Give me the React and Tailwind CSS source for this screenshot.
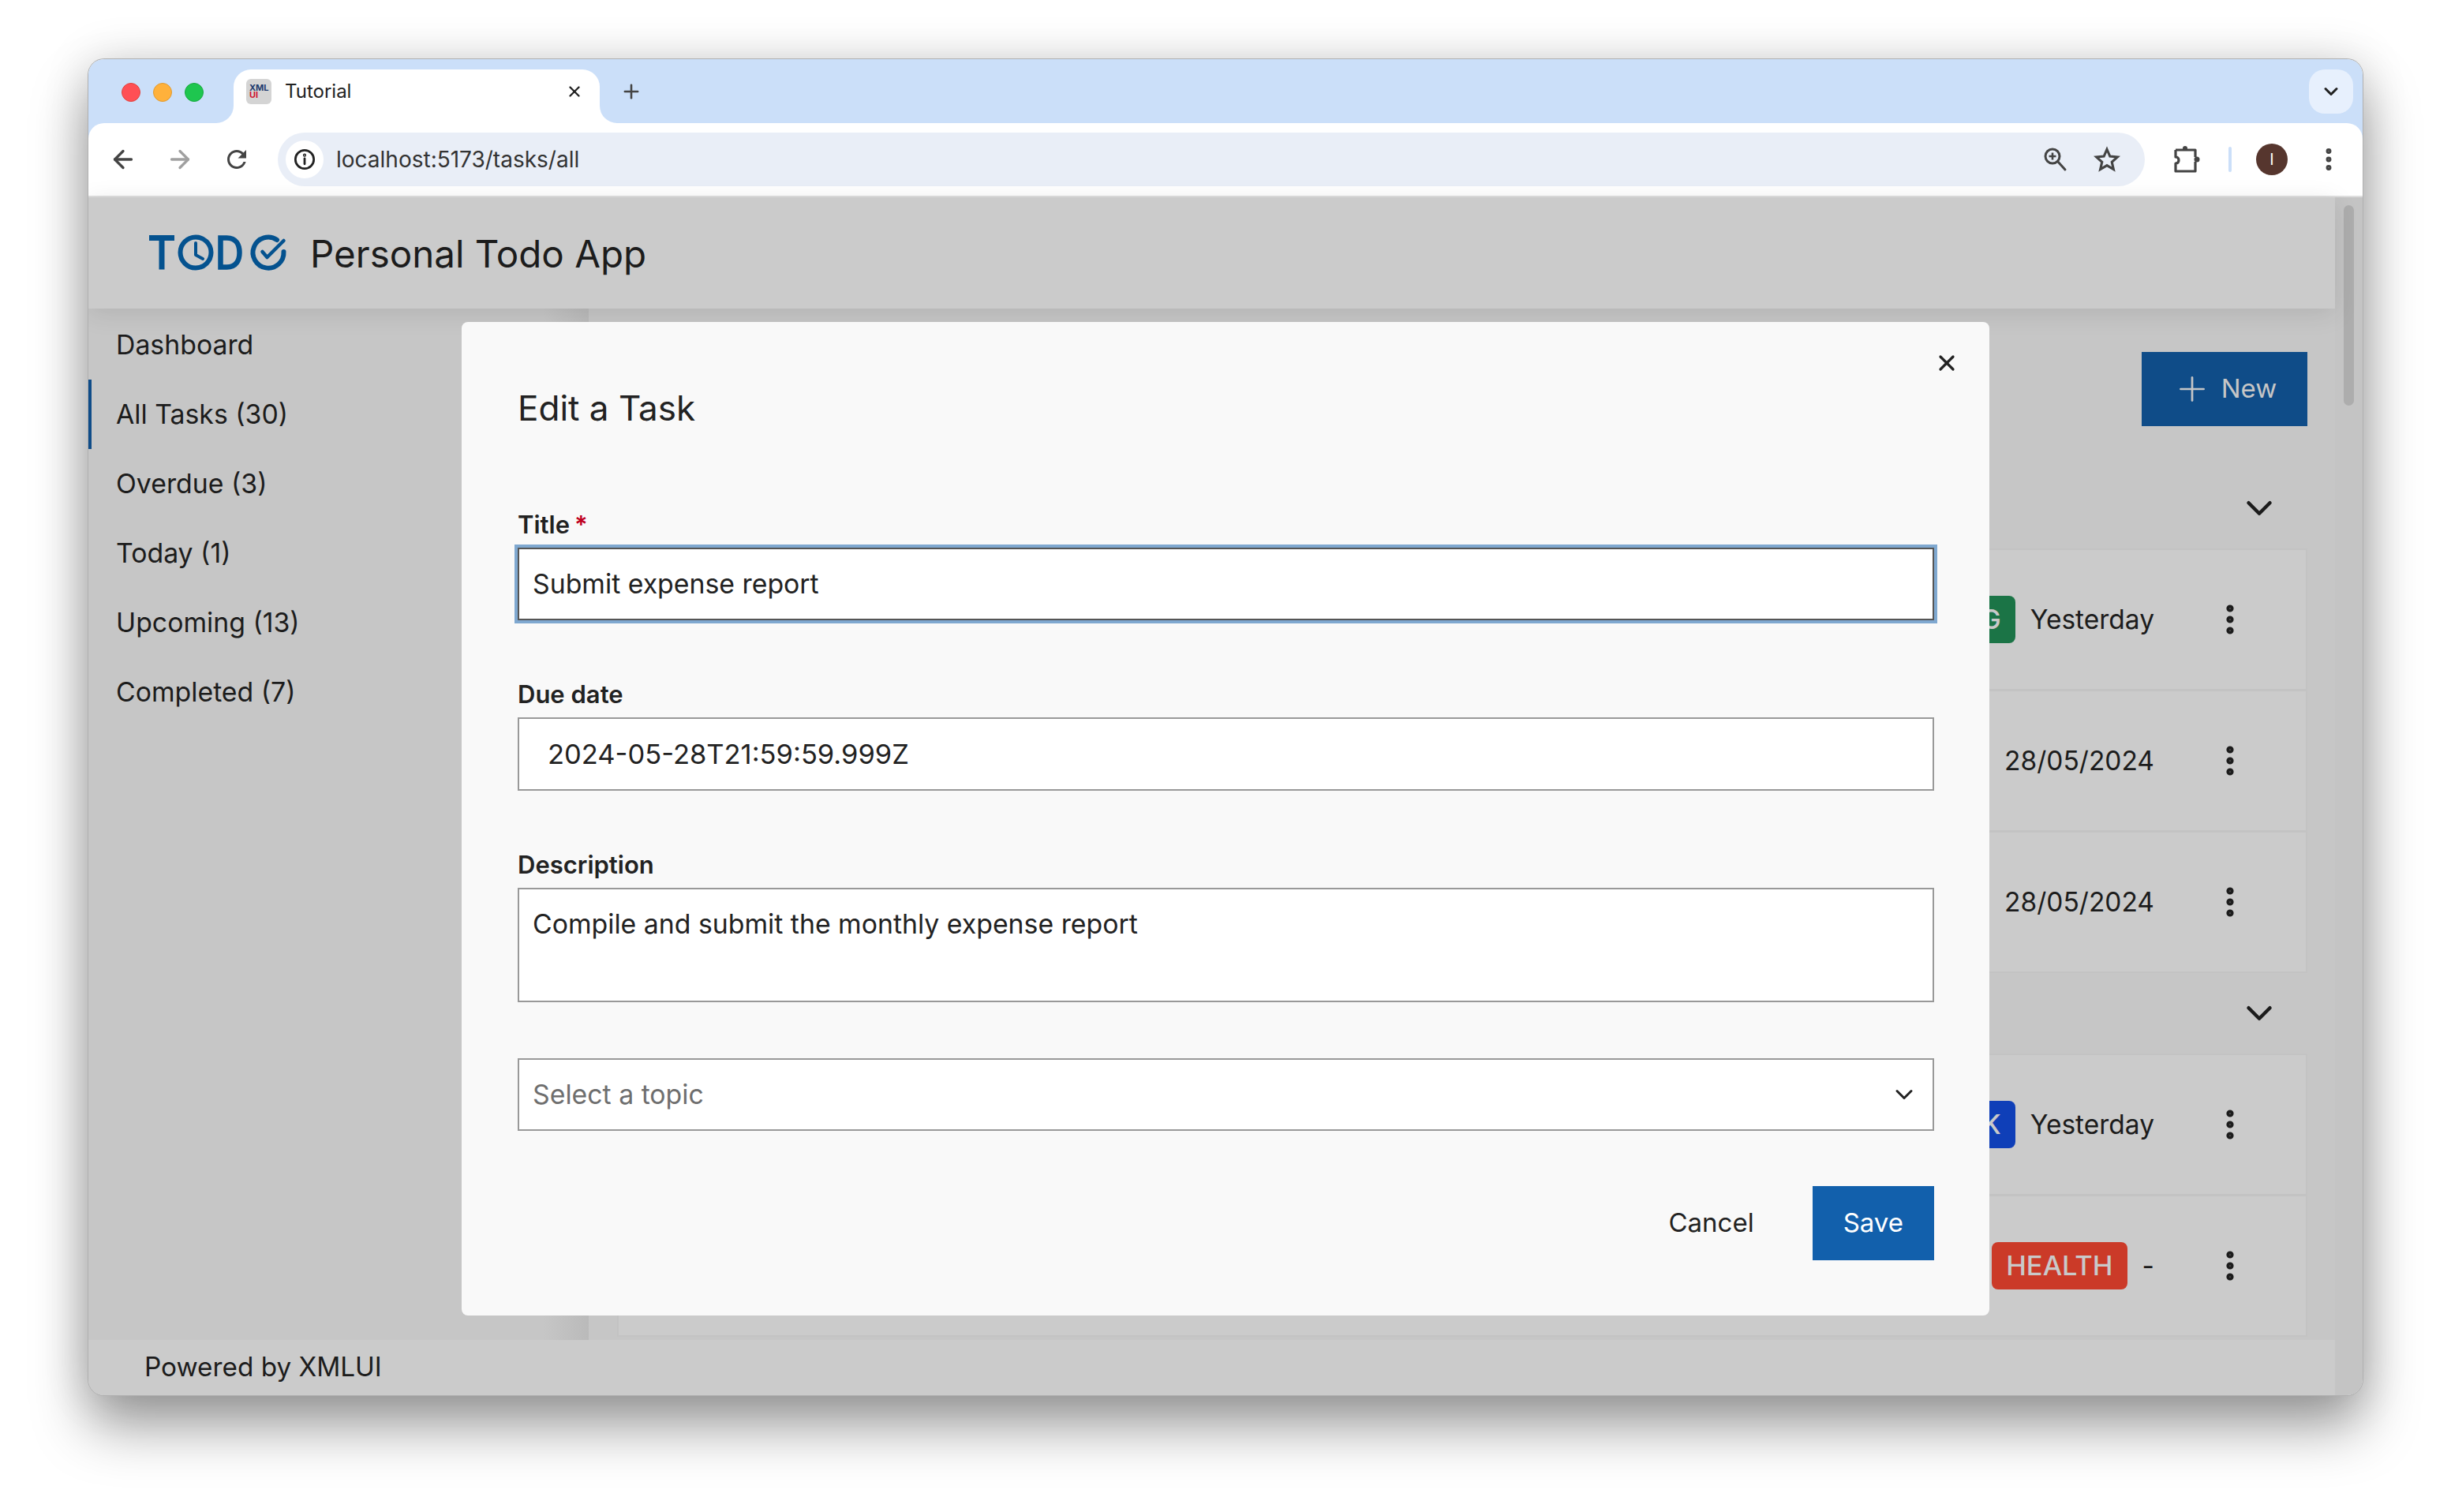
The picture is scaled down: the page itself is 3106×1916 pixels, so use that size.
import { ArrowLeft, ArrowRight, ChevronDown, EllipsisVertical, Plus, X } from 'lucide-react';

const NAV_ITEMS = ['Dashboard', 'All Tasks (30)', 'Overdue (3)', 'Today (1)', 'Upcoming (13)', 'Completed (7)'];

function TabStrip() {
  return (
    <div className="h-[81px] shrink-0 bg-[#cbdff9] flex items-end">
      {/* Traffic lights */}
      <div className="w-[184px] h-[68px] pl-[42px] pb-[10px] flex items-center gap-4">
        <span className="w-6 h-6 rounded-full bg-[#ff4f55] border border-[#e0443e]" />
        <span className="w-6 h-6 rounded-full bg-[#ffb13b] border border-[#e09a30]" />
        <span className="w-6 h-6 rounded-full bg-[#1ec64f] border border-[#19a83f]" />
      </div>
      {/* Active tab */}
      <div className="relative w-[464px] h-[68px] bg-white rounded-t-[22px] flex items-center pl-4 pb-[12px]">
        <div className="absolute left-[-22px] bottom-0 w-[22px] h-[22px] bg-white">
          <div className="w-full h-full bg-[#cbdff9] rounded-br-[22px]" />
        </div>
        <div className="absolute right-[-22px] bottom-0 w-[22px] h-[22px] bg-white">
          <div className="w-full h-full bg-[#cbdff9] rounded-bl-[22px]" />
        </div>
        <div className="w-8 h-8 rounded-[6px] bg-[#d4d4d4] flex flex-col justify-center pl-1 font-bold text-[11px] leading-[9px]">
          <span className="text-[#1d3a6e]">XML</span>
          <span className="text-[#cf1030]">UI</span>
        </div>
        <span className="ml-[17px] text-[24px] leading-[30px] text-[#222]">Tutorial</span>
        <X className="ml-auto mr-[21px] w-[22px] h-[22px] text-[#222]" strokeWidth={2.6} />
      </div>
      <div className="w-[80px] h-[68px] pb-[12px] flex items-center justify-center">
        <Plus className="w-7 h-7 text-[#444]" strokeWidth={2.2} />
      </div>
      {/* Tab search */}
      <div className="ml-auto mr-3 mb-3 w-14 h-14 rounded-[20px] bg-[#e7f0fd] flex items-center justify-center">
        <ChevronDown className="w-[28px] h-[28px] text-[#222]" strokeWidth={2.6} />
      </div>
    </div>
  );
}

function Toolbar() {
  return (
    <div className="h-[94px] shrink-0 bg-[#cbdff9]">
      <div className="h-full bg-white rounded-t-[20px] border-b-2 border-[#dedede] flex items-center">
        <div className="w-[240px] pl-[26px] flex items-center gap-[36px]">
          <ArrowLeft className="w-9 h-9 text-[#444]" strokeWidth={2.2} />
          <ArrowRight className="w-9 h-9 text-[#a0a0a0]" strokeWidth={2.2} />
          <svg viewBox="0 0 24 24" className="w-9 h-9 fill-[#444]">
            <path d="M17.65 6.35C16.2 4.9 14.21 4 12 4c-4.42 0-7.99 3.58-7.99 8s3.57 8 7.99 8c3.73 0 6.84-2.55 7.73-6h-2.08c-.82 2.33-3.04 4-5.65 4-3.31 0-6-2.69-6-6s2.69-6 6-6c1.66 0 3.14.69 4.22 1.78L13 11h7V4l-2.35 2.35z" />
          </svg>
        </div>
        {/* Omnibox */}
        <div className="w-[2366px] h-[68px] rounded-full bg-[#e9eef7] flex items-center pl-[10px]">
          <div className="w-12 h-12 rounded-full bg-white flex items-center justify-center">
            <svg viewBox="0 0 24 24" className="w-7 h-7 fill-none stroke-[#222]" strokeWidth="2.4">
              <circle cx="12" cy="12" r="10" />
              <path d="M12 11v6" strokeLinecap="round" />
              <circle cx="12" cy="7.4" r="0.6" />
            </svg>
          </div>
          <span className="ml-[16px] text-[28px] leading-[34px] text-[#333]">localhost:5173/tasks/all</span>
          <svg viewBox="0 0 32 32" className="ml-auto mr-[33px] w-8 h-8 fill-none stroke-[#444]" strokeWidth="3">
            <circle cx="13" cy="12" r="9" />
            <path d="M20 19l9 10" strokeLinecap="round" />
            <path d="M13 7.5v9M8.5 12h9" strokeWidth="2.6" />
          </svg>
          <svg viewBox="0 0 24 24" className="mr-[31px] w-[34px] h-[34px] fill-none stroke-[#444]" strokeWidth="2.2">
            <path d="M12 3l2.7 6.2 6.8.6-5.1 4.5 1.5 6.6L12 17.4 6.1 20.9l1.5-6.6L2.5 9.8l6.8-.6z" strokeLinejoin="miter" />
          </svg>
        </div>
        {/* Extension, profile, menu */}
        <svg viewBox="0 0 34 36" className="ml-[36px] w-[34px] h-9 fill-none stroke-[#444]" strokeWidth="3.2">
          <path d="M3 6h25v9 M28 21v12H3V23c3 0 4-2 4-4s-1-4-4-4V6" strokeLinejoin="round" />
          <circle cx="15" cy="4" r="3" fill="#444" stroke="none" />
          <circle cx="30" cy="18" r="3.5" fill="#444" stroke="none" />
        </svg>
        <div className="ml-[36px] w-1 h-8 rounded-full bg-[#cbdff9]" />
        <div className="ml-[31px] w-10 h-10 rounded-full bg-[#56362e] flex items-center justify-center text-white text-[20px] leading-none">I</div>
        <EllipsisVertical className="ml-[34px] w-9 h-9 text-[#444]" strokeWidth={2.6} />
      </div>
    </div>
  );
}

function AppHeader() {
  return (
    <header className="relative z-10 h-[141px] shrink-0 bg-[#cbcbcb] flex items-center pl-[73px] pt-[2px] shadow-[0_6px_30px_rgba(0,0,0,0.1)]">
      <svg viewBox="185 292 180 56" className="w-[180px] h-[56px] -mt-[2px] fill-none stroke-[#04528f]">
        <path d="M189 300.5h32M205 300.5v40" strokeWidth="7" />
        <circle cx="248" cy="319" r="19.5" strokeWidth="6" />
        <path d="M248 307v15l9 5" strokeWidth="4" strokeLinecap="round" strokeLinejoin="round" />
        <path d="M279.5 300.5v37h8c12 0 16-9 16-18.500s-4-18.500-16-18.500z" strokeWidth="6.500" />
        <path d="M351 303A19.500 19.500 0 1 0 359.500 318" strokeWidth="6" strokeLinecap="round" />
        <path d="M332.500 318l6 7 21-21" strokeWidth="4.500" strokeLinecap="round" strokeLinejoin="round" />
      </svg>
      <h1 className="ml-[28px] text-[47.500px] leading-[60px] text-[#1c1c1c]">Personal Todo App</h1>
    </header>
  );
}

function Sidebar() {
  return (
    <nav className="w-[634px] shrink-0 flex flex-col pt-[2px] bg-linear-to-r from-[#c6c6c6] from-[91%] to-[#bababa]">
      {NAV_ITEMS.map((item, i) => (
        <div
          key={item}
          className={`h-[88px] flex items-center pl-[31px] text-[33.800px] text-[#1c1c1c] border-l-4 ${i === 1 ? 'border-[#0f4c88]' : 'border-transparent'}`}
        >
          {item}
        </div>
      ))}
    </nav>
  );
}

function TaskRow({ badge, letter, label, due }) {
  return (
    <div className="h-[180px] -mb-px shrink-0 bg-[#cbcbcb] border-2 border-[#c3c3c3] flex items-center justify-end pr-[72px]">
      <div className={`h-[60px] rounded-[8px] flex items-center justify-end pr-[18px] text-[#c9c9c9] text-[34.500px] font-medium ${label ? 'pl-[18px]' : 'w-[120px]'} ${badge}`}>
        {label || letter}
      </div>
      <span className="ml-[19px] mr-[72px] text-[33.500px] leading-[40px] text-[#1c1c1c]">{due}</span>
      <EllipsisVertical className="w-12 h-12 text-[#1c1c1c]" strokeWidth={2.6} />
    </div>
  );
}

function GroupHead() {
  return (
    <div className="h-[103px] shrink-0 flex items-center justify-end pr-[34px]">
      <ChevronDown className="w-[54px] h-[54px] text-[#1c1c1c]" strokeWidth={2} />
    </div>
  );
}

function TaskList() {
  return (
    <main className="flex-1 min-w-0 flex flex-col pl-[36px] pr-[35px] pt-[55px] overflow-hidden">
      <div className="self-end w-[210px] h-[94px] shrink-0 bg-[#0f4c88] flex items-center justify-center gap-[12px] text-[#c6c6c6] text-[33px]">
        <Plus className="w-[50px] h-[50px]" strokeWidth={1.3} />
        <span>New</span>
      </div>
      <div className="mt-[52px]">
        <GroupHead />
        <TaskRow badge="bg-[#1b7446]" letter="G" due="Yesterday" />
        <TaskRow badge="bg-[#0f3fb8]" due="28/05/2024" />
        <TaskRow badge="bg-[#7e2bb8]" due="28/05/2024" />
      </div>
      <GroupHead />
      <TaskRow badge="bg-[#0f3fb8]" letter="K" due="Yesterday" />
      <TaskRow badge="bg-[#cb3a28]" label="HEALTH" due="-" />
    </main>
  );
}

function Field({ label, required, children, className }) {
  return (
    <div className={className}>
      <div className="h-9 mb-[11px] flex items-center gap-[6px] text-[31px] font-semibold text-[#222]">
        {label}
        {required && <span className="text-[#c00020]">*</span>}
      </div>
      {children}
    </div>
  );
}

function EditTaskDialog() {
  return (
    <div className="absolute z-20 left-[473px] top-[158px] w-[1936px] h-[1259px] rounded-[8px] bg-[#f9f9f9] pl-[71px] pr-[70px] pt-[82px]">
      <X className="absolute top-[36px] right-[38px] w-[32px] h-[32px] text-[#222]" strokeWidth={2.4} />
      <h2 className="h-[54px] flex items-center text-[44px] text-[#222]">Edit a Task</h2>

      <Field label="Title" required className="mt-[103px]">
        <div className="h-[92px] border-2 border-[#555] bg-white outline-4 outline-[#7fa8d0] flex items-center pl-[17px] text-[33.800px] text-[#222]">
          Submit expense report
        </div>
      </Field>

      <Field label="Due date" className="mt-[76px]">
        <div className="h-[93px] border-2 border-[#999] bg-white flex items-center pl-[36px] text-[34.500px] text-[#222]">
          2024-05-28T21:59:59.999Z
        </div>
      </Field>

      <Field label="Description" className="mt-[76px]">
        <div className="h-[145px] border-2 border-[#999] bg-white pl-[17px] pt-[22px] text-[33.800px] leading-[44px] text-[#222]">
          Compile and submit the monthly expense report
        </div>
      </Field>

      <div className="mt-[71px] h-[92px] border-2 border-[#999] bg-white flex items-center justify-between pl-[17px] pr-[18px] text-[33.800px] text-[#6e6e6e]">
        Select a topic
        <ChevronDown className="w-[36px] h-[36px] text-[#222]" strokeWidth={2} />
      </div>

      <div className="mt-[70px] flex justify-end gap-[36px] text-[33px]">
        <div className="h-[94px] px-[38px] flex items-center text-[#222]">Cancel</div>
        <div className="h-[94px] px-[39px] flex items-center bg-[#1260ac] text-white">Save</div>
      </div>
    </div>
  );
}

export default function App() {
  return (
    <div className="w-[3106px] h-[1916px] bg-white pl-[112px] pt-[75px] overflow-hidden font-[Inter,sans-serif]">
      <div className="w-[2882px] h-[1693px] rounded-[20px] overflow-hidden flex flex-col shadow-[0_0_0_1px_#b0b0b0,0_40px_70px_rgba(0,0,0,0.38),0_0_60px_rgba(0,0,0,0.14)]">
        <TabStrip />
        <Toolbar />
        <div className="relative flex-1 min-h-0 flex bg-[#c4c4c4]">
          <div className="flex-1 min-w-0 flex flex-col">
            <AppHeader />
            <div className="flex-1 min-h-0 flex bg-[#c6c6c6] overflow-hidden">
              <Sidebar />
              <TaskList />
            </div>
            <footer className="relative z-10 h-[70px] shrink-0 bg-[#cbcbcb] flex items-center pl-[71px] text-[33.300px] text-[#1c1c1c]">
              Powered by XMLUI
            </footer>
          </div>
          {/* Scrollbar */}
          <div className="w-[35px] shrink-0 pl-[11px] pr-[11px] pt-[10px]">
            <div className="h-[254px] rounded-full bg-[#adadad]" />
          </div>
          <EditTaskDialog />
        </div>
      </div>
    </div>
  );
}
